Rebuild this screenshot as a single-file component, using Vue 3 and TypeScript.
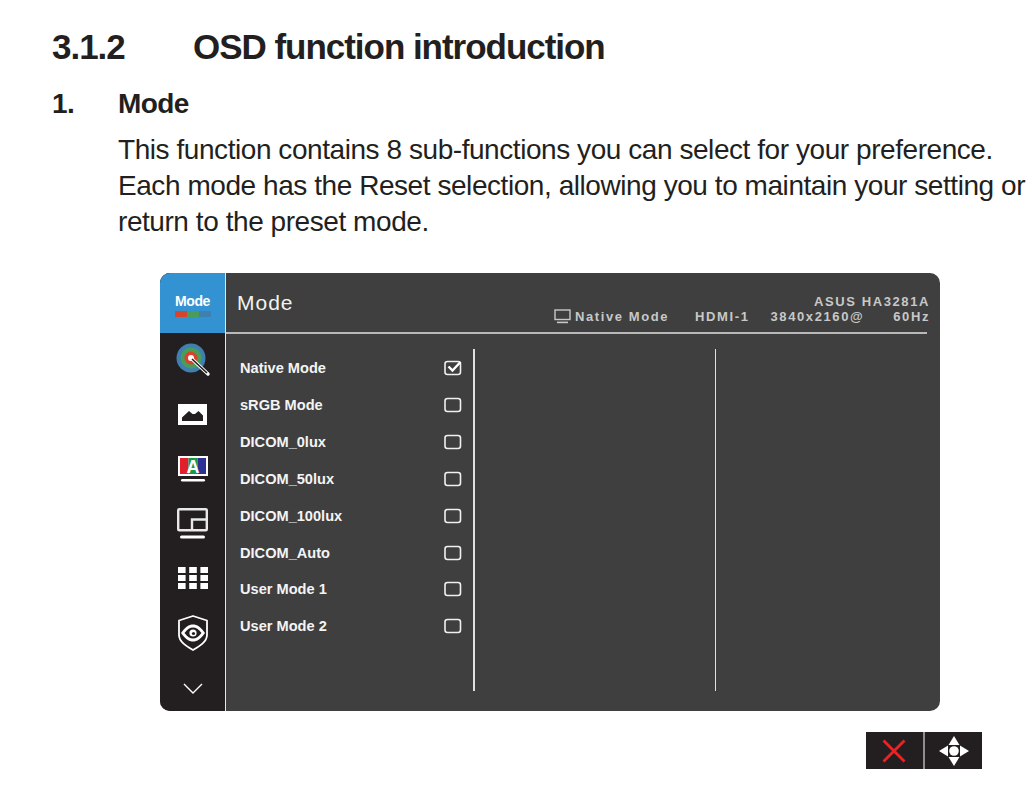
<template>
  <div class="page">
    <h1 class="section-title"><span class="section-num">3.1.2</span>OSD function introduction</h1>
    <h2 class="item-title"><span class="item-num">1.</span>Mode</h2>
    <p class="item-text">
      This function contains 8 sub-functions you can select for your preference.<br />
      Each mode has the Reset selection, allowing you to maintain your setting or<br />
      return to the preset mode.
    </p>

    <!-- OSD panel -->
    <div class="osd">
      <aside class="side">
        <div class="side-active">
          <span class="side-label">Mode</span>
          <span class="side-bar"><i class="bar-r"></i><i class="bar-g"></i><i class="bar-b"></i></span>
        </div>
        <div class="side-icons">
          <!-- color target -->
          <div class="side-slot">
            <svg class="ico" width="40" height="34" viewBox="0 0 40 34">
              <circle cx="18" cy="15" r="14.5" fill="#3f80b0" />
              <circle cx="18" cy="15" r="10.5" fill="#4a9c5a" />
              <circle cx="18" cy="15" r="6.5" fill="#d8432c" />
              <circle cx="18" cy="15" r="3" fill="#fff" />
              <path d="M19 16L35 31" stroke="#fff" stroke-width="3.4" stroke-linecap="round" />
              <path d="M19 16L34 30" stroke="#231f20" stroke-width="1.6" />
            </svg>
          </div>
          <!-- picture -->
          <div class="side-slot">
            <svg class="ico" width="29" height="21" viewBox="0 0 29 21">
              <rect width="29" height="21" fill="#fff" />
              <path d="M4 17V13.5L11 7L14.5 10H17L20.5 7L25 11.5V17Z" fill="#231f20" />
            </svg>
          </div>
          <!-- color -->
          <div class="side-slot">
            <svg class="ico" width="30" height="26" viewBox="0 0 30 26">
              <rect x="0" y="0" width="30" height="20" fill="#fff" />
              <rect x="2" y="2" width="8.5" height="16" fill="#e2202c" />
              <rect x="10.5" y="2" width="9" height="16" fill="#149a4a" />
              <rect x="19.5" y="2" width="8.5" height="16" fill="#2e3192" />
              <text x="15" y="17" class="ico-a">A</text>
              <rect x="3" y="23" width="24" height="2.6" rx="1.3" fill="#fff" />
            </svg>
          </div>
          <!-- PIP -->
          <div class="side-slot">
            <svg class="ico" width="31" height="31" viewBox="0 0 31 31">
              <rect x="1.2" y="1.2" width="28.6" height="21" rx="1" fill="none" stroke="#e8e8e8" stroke-width="2.4" />
              <path d="M15 22V11.5H30" fill="none" stroke="#e8e8e8" stroke-width="2.4" />
              <rect x="3" y="27.6" width="25" height="3" rx="1.5" fill="#fff" />
            </svg>
          </div>
          <!-- menu grid -->
          <div class="side-slot">
            <svg class="ico" width="30" height="22" viewBox="0 0 30 22">
              <g v-for="row in 3" :key="row">
                <rect
                  v-for="col in 3"
                  :key="col"
                  :x="(col - 1) * 11.2"
                  :y="(row - 1) * 8"
                  width="7.6"
                  height="6"
                  fill="#fff"
                />
              </g>
            </svg>
          </div>
          <!-- eye shield -->
          <div class="side-slot">
            <svg class="ico" width="30" height="36" viewBox="0 0 30 36">
              <path d="M15 1L29 5.5V20C29 27 21 31.5 15 35C9 31.5 1 27 1 20V5.5Z" fill="none" stroke="#fff" stroke-width="1.8" stroke-linejoin="round" />
              <path d="M3 18C7 12 11 9.5 15 9.5C19 9.5 23 12 27 18C23 24 19 26.5 15 26.5C11 26.5 7 24 3 18Z" fill="#fff" />
              <path d="M6.5 18C9.5 14 12 12.5 15 12.5C18 12.5 20.5 14 23.5 18C20.5 22 18 23.5 15 23.5C12 23.5 9.5 22 6.5 18Z" fill="#231f20" />
              <circle cx="15" cy="18" r="3.6" fill="#fff" />
              <circle cx="15.5" cy="18.5" r="1.6" fill="#231f20" />
            </svg>
          </div>
        </div>
        <div class="side-down">
          <svg width="20" height="11" viewBox="0 0 20 11">
            <path d="M1 1L10 10L19 1" fill="none" stroke="#fff" stroke-width="1.4" />
          </svg>
        </div>
      </aside>

      <div class="main">
        <header class="head">
          <span class="head-title">Mode</span>
          <div class="head-info">
            <div class="head-model">ASUS HA3281A</div>
            <div class="head-status">
              <svg class="head-monitor" width="17" height="15" viewBox="0 0 17 15">
                <rect x="1" y="1" width="15" height="9.5" fill="none" stroke="#c8c8c8" stroke-width="1.4" />
                <rect x="3" y="12.6" width="11" height="1.6" fill="#c8c8c8" />
              </svg>
              <span class="st-mode">Native Mode</span>
              <span class="st-input">HDMI-1</span>
              <span class="st-res">3840x2160@</span>
              <span class="st-hz">60Hz</span>
            </div>
          </div>
        </header>

        <div class="cols">
          <ul class="mode-list">
            <li v-for="m in modes" :key="m" class="mode-row">
              <span class="mode-name">{{ m }}</span>
              <svg class="check" width="20" height="16" viewBox="0 0 20 16">
                <rect x="1" y="1.5" width="15.5" height="13" rx="2.5" fill="none" stroke="#f0f0f0" stroke-width="1.6" />
                <path v-if="m === selected" d="M4.5 6.5L8.5 10.5L16.5 2" fill="none" stroke="#fff" stroke-width="2.4" />
              </svg>
            </li>
          </ul>
          <div class="col-mid"></div>
          <div class="col-right"></div>
        </div>
      </div>
    </div>

    <!-- bottom keys -->
    <div class="keys-wrap">
      <div class="keys">
        <div class="key-x">
          <svg width="24" height="24" viewBox="0 0 24 24">
            <path d="M1.5 1.5L22.5 22.5M22.5 1.5L1.5 22.5" stroke="#ed2224" stroke-width="2.8" />
          </svg>
        </div>
        <div class="key-nav">
          <svg width="32" height="32" viewBox="0 0 32 32">
            <path d="M16 1L21.5 10H10.5Z" fill="#fff" />
            <path d="M16 31L21.5 22H10.5Z" fill="#fff" />
            <path d="M1 16L10 10.5V21.5Z" fill="#fff" />
            <path d="M31 16L22 10.5V21.5Z" fill="#fff" />
            <circle cx="16" cy="16" r="5.6" fill="#231f20" />
            <circle cx="16" cy="16" r="4.8" fill="#fff" />
          </svg>
        </div>
      </div>
    </div>
  </div>
</template>

<script setup lang="ts">
const selected = 'Native Mode'

const modes: string[] = [
  'Native Mode',
  'sRGB Mode',
  'DICOM_0lux',
  'DICOM_50lux',
  'DICOM_100lux',
  'DICOM_Auto',
  'User Mode 1',
  'User Mode 2'
]
</script>

<style>
html,
body {
  background: #ffffff;
}
</style>

<style scoped>
.page {
  width: 1032px;
  height: 785px;
  overflow: hidden;
  box-sizing: border-box;
  padding-top: 27px;
  font-family: 'Liberation Sans', Arial, sans-serif;
  color: #231f20;
  background: #ffffff;
}

.section-title {
  margin: 0 0 0 52px;
  font-size: 35px;
  line-height: 40px;
  font-weight: 700;
  letter-spacing: -1.03px;
  white-space: nowrap;
}

.section-num {
  display: inline-block;
  width: 141px;
}

.item-title {
  margin: 18px 0 0 52px;
  font-size: 28px;
  line-height: 38px;
  font-weight: 700;
  letter-spacing: -0.6px;
}

.item-num {
  display: inline-block;
  width: 66px;
}

.item-text {
  margin: 9px 0 0 118px;
  font-size: 28px;
  line-height: 36px;
  font-weight: 400;
  letter-spacing: -0.44px;
  white-space: nowrap;
}

/* OSD */
.osd {
  display: flex;
  width: 780px;
  height: 438px;
  margin: 33px 0 0 160px;
  border-radius: 10px;
  overflow: hidden;
  background: #3f3f3f;
}

.side {
  display: flex;
  flex-direction: column;
  width: 65px;
  flex: none;
  background: #231f20;
  border-right: 1px solid #e6e6e6;
}

.side-active {
  display: flex;
  flex-direction: column;
  align-items: center;
  height: 60px;
  padding-top: 20px;
  box-sizing: border-box;
  background: #3392d2;
}

.side-label {
  color: #fff;
  font-size: 14px;
  line-height: 16px;
  font-weight: 700;
  letter-spacing: -0.4px;
}

.side-bar {
  display: flex;
  width: 36px;
  height: 6px;
  margin-top: 2px;
}

.side-bar i {
  flex: 1;
}

.bar-r {
  background: #d8432c;
}

.bar-g {
  background: #4a9c5a;
}

.bar-b {
  background: #3f80b0;
}

.side-icons {
  display: flex;
  flex-direction: column;
  flex: 1;
}

.side-slot {
  display: flex;
  align-items: center;
  justify-content: center;
  height: 54.5px;
}

.ico {
  display: block;
}

.ico-a {
  fill: #fff;
  font-size: 18px;
  font-weight: 700;
  text-anchor: middle;
  font-family: 'Liberation Sans', Arial, sans-serif;
}

.side-down {
  display: flex;
  justify-content: center;
  height: 50px;
  padding-top: 22px;
  box-sizing: border-box;
}

.main {
  flex: 1;
  display: flex;
  flex-direction: column;
  min-width: 0;
}

.head {
  display: flex;
  justify-content: space-between;
  height: 61px;
  box-sizing: border-box;
  margin-right: 13px;
  padding-left: 11px;
  border-bottom: 2px solid #b9b9b9;
}

.head-title {
  margin-top: 17px;
  color: #f2f2f2;
  font-size: 21px;
  line-height: 26px;
  letter-spacing: 1px;
}

.head-info {
  margin-right: -3px;
  padding-top: 21px;
  text-align: right;
  color: #c8c8c8;
  font-size: 13px;
  line-height: 15px;
  font-weight: 700;
  letter-spacing: 1.6px;
}

.head-status {
  display: flex;
  align-items: center;
  justify-content: flex-end;
  white-space: nowrap;
}

.head-monitor {
  margin-right: 4px;
}

.st-input {
  margin-left: 26px;
}

.st-res {
  margin-left: 21px;
}

.st-hz {
  margin-left: 29px;
}

.cols {
  flex: 1;
  display: flex;
  padding: 15px 0 20px;
  min-height: 0;
}

.mode-list {
  width: 249px;
  margin: 0;
  padding: 1px 0 0 14px;
  box-sizing: border-box;
  list-style: none;
  border-right: 2px solid #e0e0e0;
}

.mode-row {
  display: flex;
  align-items: center;
  justify-content: space-between;
  height: 36.85px;
  padding-right: 9px;
  color: #f4f4f4;
  font-size: 14.6px;
  font-weight: 700;
}

.check {
  display: block;
}

.col-mid {
  width: 240px;
  border-right: 1px solid #e0e0e0;
}

.col-right {
  flex: 1;
}

/* bottom keys */
.keys-wrap {
  display: flex;
  margin: 21px 0 0 866px;
}

.keys {
  display: flex;
  width: 116px;
  height: 37px;
  background: #231f20;
}

.key-x {
  display: flex;
  align-items: center;
  justify-content: center;
  width: 59px;
  padding-right: 2px;
  border-right: 2px solid #8e8e8e;
  box-sizing: border-box;
}

.key-nav {
  display: flex;
  align-items: center;
  justify-content: center;
  flex: 1;
}
</style>
